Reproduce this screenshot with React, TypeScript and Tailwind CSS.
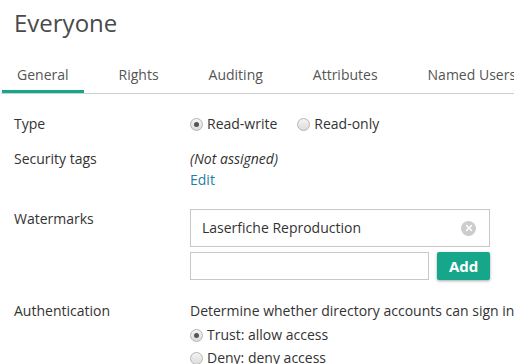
import { X } from "lucide-react"

const tabs = ["General", "Rights", "Auditing", "Attributes", "Named Users"]

function Radio({ checked, label }: { checked?: boolean; label: string }) {
  return (
    <label className="flex items-center gap-[4px]">
      <span className="w-[13px] h-[13px] rounded-full border border-[#b5b5b5] bg-gradient-to-b from-[#f4f4f4] to-[#dcdcdc] flex items-center justify-center">
        {checked && <span className="w-[5px] h-[5px] rounded-full bg-[#555]" />}
      </span>
      <span>{label}</span>
    </label>
  )
}

function Row({ label, children, className = "" }: { label: string; children: React.ReactNode; className?: string }) {
  return (
    <div className={"flex " + className}>
      <div className="w-[176px] shrink-0">{label}</div>
      <div className="flex-1">{children}</div>
    </div>
  )
}

export default function App() {
  return (
    <div
      className="w-[514px] h-[364px] overflow-hidden bg-white text-[14px] leading-[20px] text-[#333]"
      style={{ fontFamily: '"Open Sans", sans-serif' }}
    >
      <div className="w-[640px]">
        <h1 className="pl-[14px] pt-[7px] text-[24px] leading-[32px] text-[#4a4a4a]">Everyone</h1>

        <div className="mt-[26px] ml-[1px] flex border-b border-[#cfcfcf] text-[#555]">
          {tabs.map((t, i) => (
            <div
              key={t}
              className={
                "px-[15px] pb-[5px] mr-[20px] whitespace-nowrap border-b-[3px] " +
                (i === 0 ? "ml-[1px] border-[#16a68a]" : "border-transparent")
              }
            >
              {t}
            </div>
          ))}
        </div>

        <div className="pl-[14px] pt-[20px]">
          <Row label="Type">
            <div className="flex gap-[20px]">
              <Radio checked label="Read-write" />
              <Radio label="Read-only" />
            </div>
          </Row>

          <Row label="Security tags" className="mt-[15px]">
            <div className="italic">(Not assigned)</div>
            <div className="text-[#1f7ea1] mt-[1px]">Edit</div>
          </Row>

          <Row label="Watermarks" className="mt-[19px]">
            <div className="w-[300px]">
              <div className="h-[38px] border border-[#c8c8c8] flex items-center justify-between pl-[11px] pr-[13px]">
                <span>Laserfiche Reproduction</span>
                <span className="w-[15px] h-[15px] rounded-full bg-[#cccccc] flex items-center justify-center">
                  <X size={10} strokeWidth={3.5} color="#ffffff" />
                </span>
              </div>
              <div className="mt-[5px] flex gap-[8px]">
                <div className="w-[240px] h-[28px] border border-[#c8c8c8]" />
                <button className="w-[53px] h-[28px] rounded-[2px] bg-[#16a68a] text-white font-bold text-[15px] shadow-[0_1px_3px_rgba(0,0,0,0.35)]">
                  Add
                </button>
              </div>
            </div>
          </Row>

          <Row label="Authentication" className="mt-[21px]">
            <div className="whitespace-nowrap">Determine whether directory accounts can sign in</div>
            <div className="mt-[4px] flex flex-col gap-[3px]">
              <Radio checked label="Trust: allow access" />
              <Radio label="Deny: deny access" />
            </div>
          </Row>
        </div>
      </div>
    </div>
  )
}
